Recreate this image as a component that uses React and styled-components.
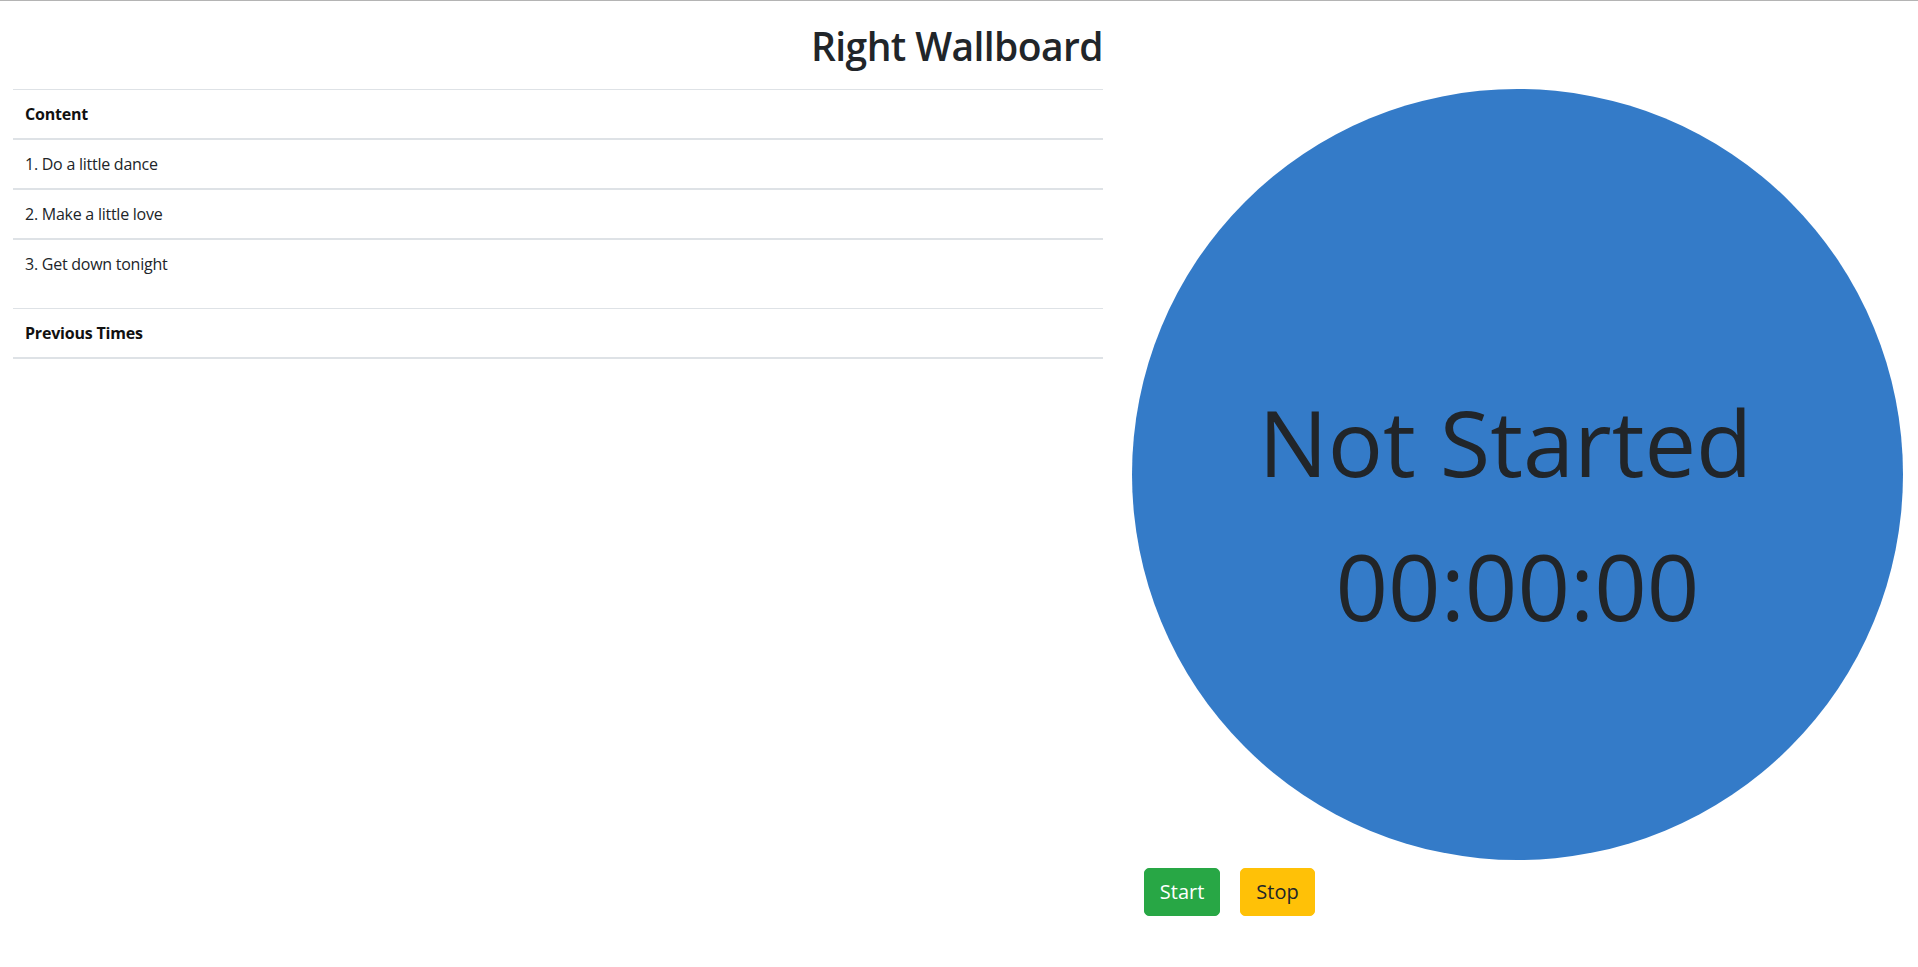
import React from 'react'
import styled, { createGlobalStyle } from 'styled-components'

const GlobalStyle = createGlobalStyle`
  html, body {
    margin: 0;
    padding: 0;
    background: #ffffff;
  }
  body {
    font-family: "Open Sans", "Noto Sans", "Liberation Sans", sans-serif;
    font-size: 16px;
    line-height: 1.5;
    color: #212529;
    border-top: 1px solid #b4b4b4;
  }
`

const Page = styled.div`
  width: 1918px;
  display: grid;
  grid-template-columns: 7fr 5fr;
  grid-template-rows: auto 1fr;
`

const TitleCell = styled.div`
  grid-column: 1 / 2;
  padding: 21px 16px 0 13px;
  margin-bottom: 19px;
  text-align: right;
`

const Title = styled.h1`
  margin: 0;
  font-size: 39px;
  line-height: 48px;
  font-weight: 600;
  letter-spacing: -0.6px;
`

const LeftCol = styled.div`
  padding: 0 16px 0 13px;
`

const RightCol = styled.div`
  padding: 0 15px 0 13px;
`

const Table = styled.table`
  width: 100%;
  border-collapse: collapse;
  margin-bottom: ${(p) => p.$gap || 0}px;
`

const HeadCell = styled.th`
  text-align: left;
  font-weight: 700;
  padding: 12px;
  border-top: 1px solid #dee2e6;
  border-bottom: 2px solid #dee2e6;
  color: #111;
  letter-spacing: -0.2px;
`

const Cell = styled.td`
  padding: 12px;
  letter-spacing: -0.25px;
  border-top: ${(p) => (p.$first ? 'none' : '2px solid #dee2e6')};
`

const Circle = styled.div`
  width: 100%;
  aspect-ratio: 1 / 1;
  border-radius: 50%;
  background: #347bc8;
  display: flex;
  flex-direction: column;
  align-items: center;
  justify-content: center;
  box-sizing: border-box;
  padding-top: 78px;
`

const BigLine = styled.div`
  font-size: 92px;
  line-height: 144px;
  font-weight: 400;
  color: #212529;
  white-space: nowrap;
  padding-right: ${(p) => p.$shift || 0}px;
`

const ButtonRow = styled.div`
  display: flex;
  gap: 20px;
  margin-top: 8px;
  padding-left: 12px;
`

const Button = styled.button`
  font-family: inherit;
  font-size: 20px;
  line-height: 30px;
  padding: 8px 15px;
  border-radius: 5px;
  border: 1px solid ${(p) => p.$bg};
  background: ${(p) => p.$bg};
  color: ${(p) => p.$fg};
  cursor: pointer;
`

const steps = ['1. Do a little dance', '2. Make a little love', '3. Get down tonight']

export default function App() {
  return (
    <>
      <GlobalStyle />
      <Page>
        <TitleCell>
          <Title>Right Wallboard</Title>
        </TitleCell>
        <div />
        <LeftCol>
          <Table $gap={20}>
            <thead>
              <tr>
                <HeadCell>Content</HeadCell>
              </tr>
            </thead>
            <tbody>
              {steps.map((s, i) => (
                <tr key={s}>
                  <Cell $first={i === 0}>{s}</Cell>
                </tr>
              ))}
            </tbody>
          </Table>
          <Table>
            <thead>
              <tr>
                <HeadCell>Previous Times</HeadCell>
              </tr>
            </thead>
            <tbody />
          </Table>
        </LeftCol>
        <RightCol>
          <Circle>
            <BigLine $shift={24}>Not Started</BigLine>
            <BigLine>00:00:00</BigLine>
          </Circle>
          <ButtonRow>
            <Button $bg="#28a745" $fg="#ffffff">Start</Button>
            <Button $bg="#ffc107" $fg="#212529">Stop</Button>
          </ButtonRow>
        </RightCol>
      </Page>
    </>
  )
}
